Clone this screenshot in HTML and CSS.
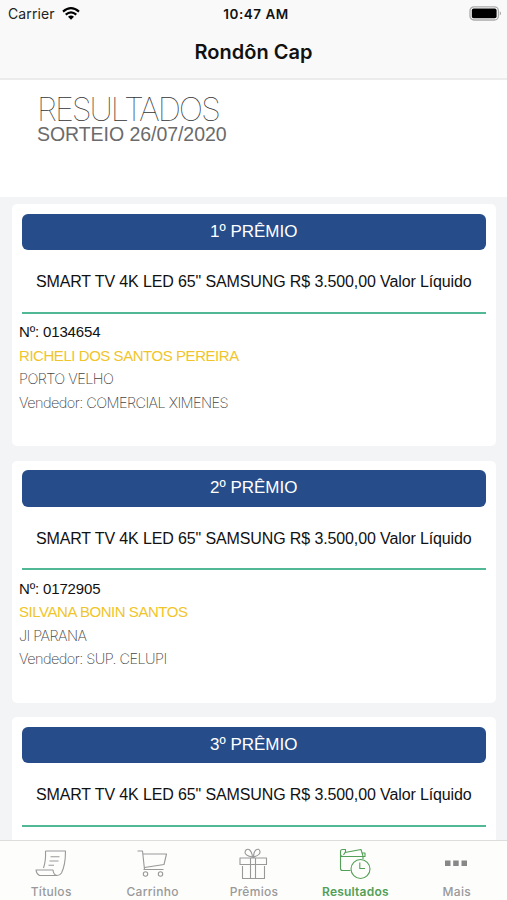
FILE: index.html
```html
<!DOCTYPE html>
<html lang="pt-BR">
<head>
<meta charset="utf-8">
<title>Rondôn Cap</title>
<link rel="stylesheet" href="styles.css">
</head>
<body>
<div class="app">
  <header class="top">
    <div class="status">
      <div class="carrier"><span class="carrier-name">Carrier</span>
        <svg class="wifi" width="18" height="13" viewBox="0 0 18 13"><g fill="none" stroke="#000" stroke-width="2.1"><path d="M1 4.6Q9-2.3 17 4.6"/><path d="M3.7 7.6Q9 3.1 14.3 7.6"/></g><path d="M6 9.8Q9 7.4 12 9.8L9 12.8Z"/></svg>
      </div>
      <time class="clock">10:47 AM</time>
      <div class="power">
        <svg width="33" height="15" viewBox="0 0 33 15"><rect x="1" y=".8" width="28.4" height="13.2" rx="4" fill="#fff" stroke="#aaa" stroke-width="1.3"/><rect x="2.8" y="2.6" width="24.8" height="9.6" rx="1.8"/><path d="M30.8 5.2q2.2 2.2 0 4.4z" fill="#999"/></svg>
      </div>
    </div>
    <h1 class="title"><span>Rondôn Cap</span></h1>
  </header>
  <main class="content">
    <section class="intro">
      <h2 class="heading"><span>RESULTADOS</span></h2>
      <p class="date"><span>SORTEIO 26/07/2020</span></p>
    </section>
    <div class="cards">
      <article class="card">
        <div class="banner"><span>1º PRÊMIO</span></div>
        <p class="prize"><span>SMART TV 4K LED 65" SAMSUNG R$ 3.500,00 Valor Líquido</span></p>
        <div class="details">
          <p class="number"><span>Nº: 0134654</span></p>
          <p class="winner"><span>RICHELI DOS SANTOS PEREIRA</span></p>
          <p class="place"><span>PORTO VELHO</span></p>
          <p class="seller"><span>Vendedor: COMERCIAL XIMENES</span></p>
        </div>
      </article>
      <article class="card">
        <div class="banner"><span>2º PRÊMIO</span></div>
        <p class="prize"><span>SMART TV 4K LED 65" SAMSUNG R$ 3.500,00 Valor Líquido</span></p>
        <div class="details">
          <p class="number"><span>Nº: 0172905</span></p>
          <p class="winner"><span>SILVANA BONIN SANTOS</span></p>
          <p class="place"><span>JI PARANA</span></p>
          <p class="seller"><span>Vendedor: SUP. CELUPI</span></p>
        </div>
      </article>
      <article class="card">
        <div class="banner"><span>3º PRÊMIO</span></div>
        <p class="prize"><span>SMART TV 4K LED 65" SAMSUNG R$ 3.500,00 Valor Líquido</span></p>
      </article>
    </div>
  </main>
  <nav class="tabs">
    <a class="tab"><svg width="34" height="34" viewBox="0 0 34 34"><path d="M11.500 4H31.500Q31.500 18 27.500 26 25.500 29 22 28.500H5.500Q2.500 27 2 23H19Q19.500 28 23 28.500M11.500 4Q12 14 9.500 21M16.500 9.800h9M15.500 14h9M14.500 18.300h5.500"/></svg><span>Títulos</span></a>
    <a class="tab"><svg width="34" height="34" viewBox="0 0 34 34"><path d="M2.500 4H7.500L9.500 22.500M7.500 7H31.500L29 17.500 9.500 20.500M8.500 22.500H28.500"/><circle cx="10.500" cy="27" r="2.200"/><circle cx="25.500" cy="27" r="2.200"/></svg><span>Carrinho</span></a>
    <a class="tab"><svg width="34" height="34" viewBox="0 0 34 34"><path d="M4 11H30.500V17.500H4ZM6.500 19V31.500H28.500V19M14.500 11V31.500M19.500 11V31.500M16.500 10Q9 8.500 9 5.500 9.500 1.500 13 2.500 16 4.500 16.500 10ZM17.500 10Q24.500 8 24 4.500 23 1 20 2.800 17.500 5 17.500 10Z"/></svg><span>Prêmios</span></a>
    <a class="tab active"><svg width="34" height="34" viewBox="0 0 34 34"><path d="M12.500 23.500H4.500Q2.500 23.500 2.500 21.500V4.500Q2.500 2.500 4.500 2.500H7.500V5M2.500 7.500Q2.500 9.500 5 9.500H27V6H24.500M5.500 8 7 5.500 23 2.500 25 9M25 9.500V12"/><circle cx="22.500" cy="22" r="9.500"/><path d="M21.800 15.500V21.500H27"/></svg><span>Resultados</span></a>
    <a class="tab more"><svg width="34" height="34" viewBox="0 0 34 34"><path d="M6 13.500h5.500v5.500H6zM14.200 13.500h5.500v5.500h-5.500zM22.500 13.500h5.500v5.500H22.500z"/></svg><span>Mais</span></a>
  </nav>
</div>
</body>
</html>
```
FILE: styles.css
```css
* { box-sizing: border-box; margin: 0; padding: 0; }
body { width: 507px; height: 900px; overflow: hidden; font-family: "Liberation Sans", Arial, sans-serif; color: #111; }
svg { display: block; }
.app { display: flex; flex-direction: column; height: 900px; }
.top { height: 80px; flex: none; background: #f9f9f9; border-bottom: 2px solid #ececec; font-family: Inter, sans-serif; }
.status { display: grid; grid-template-columns: 1fr auto 1fr; height: 27px; padding: 0 5px 0 8px; align-items: center; font-size: 14px; }
.carrier { display: flex; align-items: center; gap: 7px; color: #222; }
.carrier-name { letter-spacing: .1px; }
.clock { font-weight: 600; font-size: 13.5px; letter-spacing: .5px; padding-left: 2px; }
.power { display: flex; justify-content: flex-end; }
.title { height: 50px; line-height: 50px; text-align: center; font-size: 20px; font-weight: 600; }
.content { flex: 1; min-height: 0; overflow: hidden; background: #f3f4f6; }
.intro { height: 117px; padding: 14px 37px 0; background: #fff; color: #6b6b6b; }
.heading { font-family: Inter, sans-serif; font-weight: 100; font-size: 32.5px; line-height: 31px; letter-spacing: -2.1px; color: #333; }
.date { font-size: 19.5px; line-height: 18px; letter-spacing: -.05px; }
.cards { display: flex; flex-direction: column; gap: 14.5px; padding: 7px 11px 0 12px; }
.card { height: 242px; flex: none; background: #fff; border-radius: 5px; padding: 9.5px 10px 0 9.5px; }
.banner { height: 36.5px; line-height: 36.5px; border-radius: 6px; background: #274c8a; color: #fff; text-align: center; font-size: 17px; }
.prize { height: 63.5px; line-height: 63px; border-bottom: 2px solid #50b894; text-align: center; white-space: nowrap; font-size: 16px; letter-spacing: -.12px; }
.details { padding-top: 6.5px; margin-left: -2.5px; font-size: 15px; line-height: 23.6px; white-space: nowrap; }
.number { letter-spacing: -.15px; }
.winner { color: #f0c52b; letter-spacing: -.45px; }
.place, .seller { font-family: Inter, sans-serif; font-weight: 200; font-size: 14.5px; color: #444; letter-spacing: -.55px; }
.tabs { display: grid; grid-template-columns: repeat(5, 1fr); flex: none; height: 60px; border-top: 1px solid #ddd; background: #fdfdfc; font-family: Inter, sans-serif; }
.tab { display: flex; flex-direction: column; align-items: center; padding-top: 6px; color: #999; font-size: 12px; font-weight: 500; line-height: 14px; letter-spacing: .3px; }
.tab span { margin-top: 4px; padding-left: 1px; }
.tab svg { fill: none; stroke: currentColor; stroke-width: 1.1; stroke-linejoin: round; }
.active { color: #52a057; font-weight: 600; letter-spacing: .2px; }
.more svg { fill: #888; stroke: none; }
```
